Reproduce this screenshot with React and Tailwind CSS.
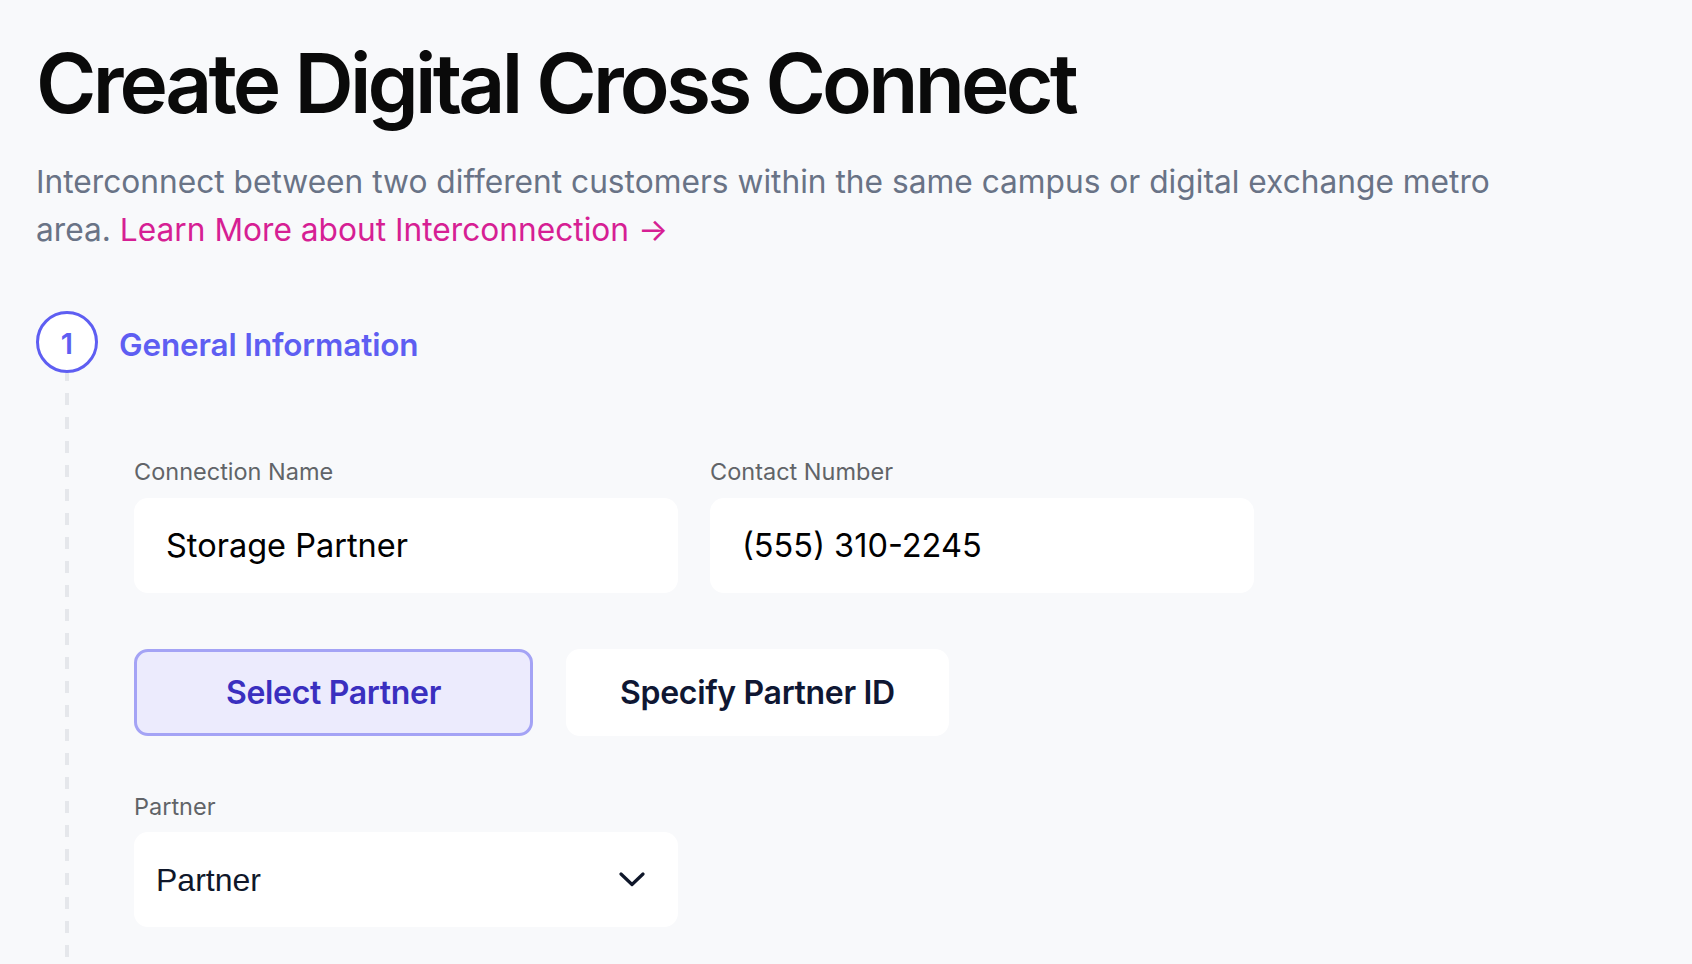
import React from "react";

export default function App() {
  return (
    <div className="min-h-screen bg-[#f8f9fb] pl-[36px] pt-[39px] pr-8 overflow-hidden" style={{ fontFamily: "Inter, 'Noto Sans', sans-serif" }}>
      <h1 className="text-[82px] leading-[90px] font-semibold tracking-[-0.046em] text-[#0a0a0a]">
        Create Digital Cross Connect
      </h1>
      <p className="mt-[29px] max-w-[1490px] text-[31.7px] leading-[48px] text-[#697386]">
        Interconnect between two different customers within the same campus or digital exchange metro area.{" "}
        <a href="#" className="text-[#d61f94]">Learn More about Interconnection →</a>
      </p>

      <div className="mt-[57px] flex">
        <div className="flex w-[62px] flex-col items-center">
          <div className="flex h-[62px] w-[62px] items-center justify-center rounded-full border-[3px] border-[#5e5ef2] bg-white pt-[4px] text-[29px] font-semibold text-[#5e5ef2]">
            1
          </div>
          <div className="w-[4px] flex-1 bg-[repeating-linear-gradient(to_bottom,#e5e7eb_0px,#e5e7eb_8px,transparent_8px,transparent_20px,#e5e7eb_20px,#e5e7eb_24px)]" />
        </div>

        <div className="ml-[21px] flex flex-col">
          <div className="flex h-[62px] items-center pt-[6px] text-[31.5px] font-semibold tracking-[-0.005em] text-[#5e5ef2]">
            General Information
          </div>

          <div className="pl-[15px] pt-[84px] pb-[120px]">
            <div className="flex gap-[32px]">
              <div className="flex w-[544px] flex-col">
                <label className="text-[23.5px] leading-[29px] text-[#616468]">Connection Name</label>
                <div className="mt-[12px] flex h-[95px] items-center rounded-[14px] bg-white px-[32px] pt-[2px] text-[32.5px] text-black">
                  Storage Partner
                </div>
              </div>
              <div className="flex w-[544px] flex-col">
                <label className="text-[23.5px] leading-[29px] text-[#616468]">Contact Number</label>
                <div className="mt-[12px] flex h-[95px] items-center rounded-[14px] bg-white px-[32px] pt-[2px] text-[32.5px] text-black">
                  (555) 310-2245
                </div>
              </div>
            </div>

            <div className="mt-[56px] flex gap-[33px]">
              <button className="flex h-[87px] w-[399px] items-center justify-center rounded-[14px] border-[3px] border-[#a4a3f5] bg-[#ecebfd] text-[32px] font-semibold tracking-[-0.01em] text-[#3a2fbf]">
                Select Partner
              </button>
              <button className="flex h-[87px] w-[383px] items-center justify-center rounded-[14px] bg-white text-[32px] font-semibold tracking-[-0.01em] text-[#0f1733]">
                Specify Partner ID
              </button>
            </div>

            <div className="mt-[56px] flex w-[544px] flex-col">
              <label className="text-[23.5px] leading-[29px] text-[#616468]">Partner</label>
              <div className="mt-[11px] flex h-[95px] items-center justify-between rounded-[14px] bg-white pl-[22px] pr-[33px]">
                <span className="text-[32px] text-[#0f172a]" style={{ fontFamily: "'Liberation Sans', Arial, sans-serif" }}>Partner</span>
                <svg width="26" height="15" viewBox="0 0 26 15" fill="none">
                  <polyline points="2,2 13,12.5 24,2" stroke="#0f172a" strokeWidth="3.2" strokeLinecap="round" strokeLinejoin="round" />
                </svg>
              </div>
            </div>
          </div>
        </div>
      </div>
    </div>
  );
}
